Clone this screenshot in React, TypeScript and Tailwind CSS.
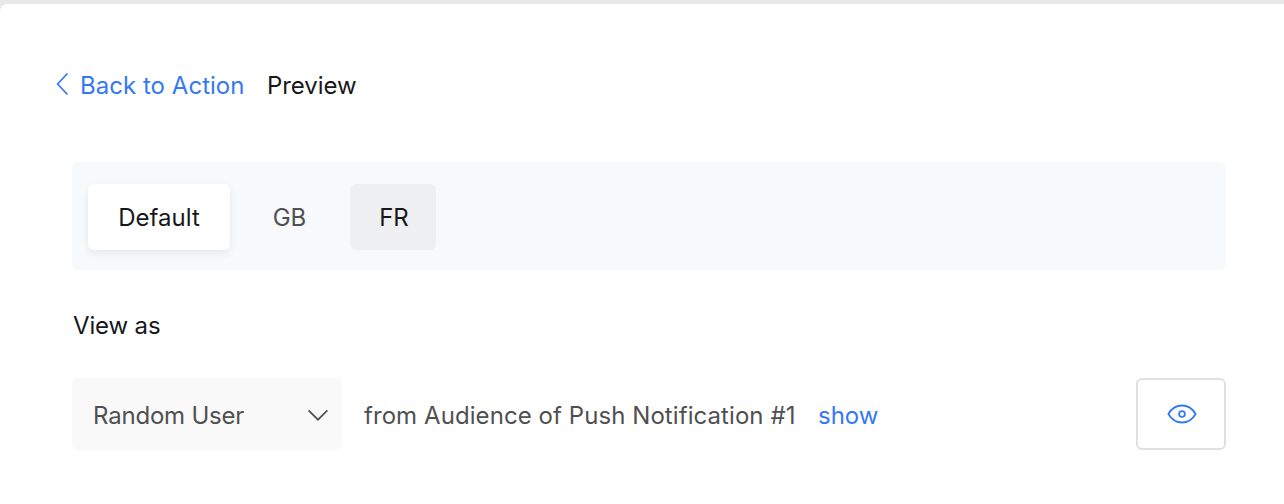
import { useState } from 'react'
import clsx from 'clsx'

const tabs = [
  { id: 'default', label: 'Default', className: 'w-[142px]' },
  { id: 'gb', label: 'GB', className: 'ml-3 w-[95px]' },
  { id: 'fr', label: 'FR', className: 'ml-[13px] w-[86px] pl-0.5' },
]

function ChevronLeft() {
  return (
    <svg className="h-[24px] w-[14px]" viewBox="0 0 14 24" fill="none" stroke="currentColor" strokeWidth="1.7">
      <path d="M12.4 1.5 2.6 12l9.8 10.5" />
    </svg>
  )
}

function ChevronDown() {
  return (
    <svg className="h-[14px] w-[22px]" viewBox="0 0 22 14" fill="none" stroke="currentColor" strokeWidth="1.7">
      <path d="m1.6 3.4 9.4 9.3 9.4-9.3" />
    </svg>
  )
}

function Eye() {
  return (
    <svg className="h-[20px] w-[30px]" viewBox="0 0 30 20" fill="none" stroke="currentColor" strokeWidth="1.8">
      <path d="M1.4 10C4.6 4.4 9.4 1.5 15 1.5S25.4 4.4 28.6 10C25.4 15.6 20.6 18.5 15 18.5S4.6 15.6 1.4 10Z" />
      <circle cx="15" cy="10" r="2.9" />
    </svg>
  )
}

function LanguageTabs() {
  const [selected, setSelected] = useState('default')

  return (
    <div className="flex h-[108px] rounded-md bg-[#f8f9fb] px-4 pt-[22px]">
      {tabs.map((tab) => (
        <button
          key={tab.id}
          onClick={() => setSelected(tab.id)}
          className={clsx(
            'h-[66px] rounded-md pt-px text-center',
            tab.className,
            tab.id === selected && 'bg-white text-[#18181a] shadow-[0_3px_8px_rgba(0,0,0,0.08)]',
            tab.id === 'gb' && tab.id !== selected && 'text-[#505153]',
            tab.id === 'fr' && tab.id !== selected && 'bg-[#eeeff0] text-[#18181a]',
          )}
        >
          {tab.label}
        </button>
      ))}
    </div>
  )
}

export default function App() {
  return (
    <div className="h-[504px] overflow-hidden bg-[#e8e8e8] pt-1 font-['Inter','Liberation_Sans',sans-serif] text-[24px] leading-8 text-[#18181a]">
      <div className="h-[500px] rounded-tl-lg bg-white pr-[58px] pt-[66px]">
        <div className="flex h-8 whitespace-nowrap pl-[55px]">
          <a className="flex w-[212px] text-[#3478f6]" href="#">
            <span className="w-[25px] pt-[2px]">
              <ChevronLeft />
            </span>
            <span className="tracking-[0.03px]">Back to Action</span>
          </a>
          <h1 className="tracking-[-0.05px]">Preview</h1>
        </div>

        <div className="pl-[72px] pt-[60px]">
          <LanguageTabs />

          <h2 className="mt-10 whitespace-nowrap pl-px tracking-[-0.15px]">View as</h2>

          <div className="mt-[36px] flex h-[72px] whitespace-nowrap text-[#505050]">
            <button className="flex w-[270px] items-center rounded-md bg-[#f9f9f9] pl-[21px] pr-[13px] text-left">
              <span className="flex-1 pt-[3px] tracking-[-0.2px]">Random User</span>
              <ChevronDown />
            </button>
            <div className="ml-[22px] flex flex-1 items-center pt-[3px]">
              <span className="w-[454px] tracking-[0.07px]">from Audience of Push Notification #1</span>
              <a className="text-[#3478f6]" href="#">show</a>
            </div>
            <button
              aria-label="Toggle preview"
              className="flex w-[90px] items-center justify-center rounded-md border-2 border-[#e0e0e0] pl-[2px] text-[#3478f6]"
            >
              <Eye />
            </button>
          </div>
        </div>
      </div>
    </div>
  )
}
